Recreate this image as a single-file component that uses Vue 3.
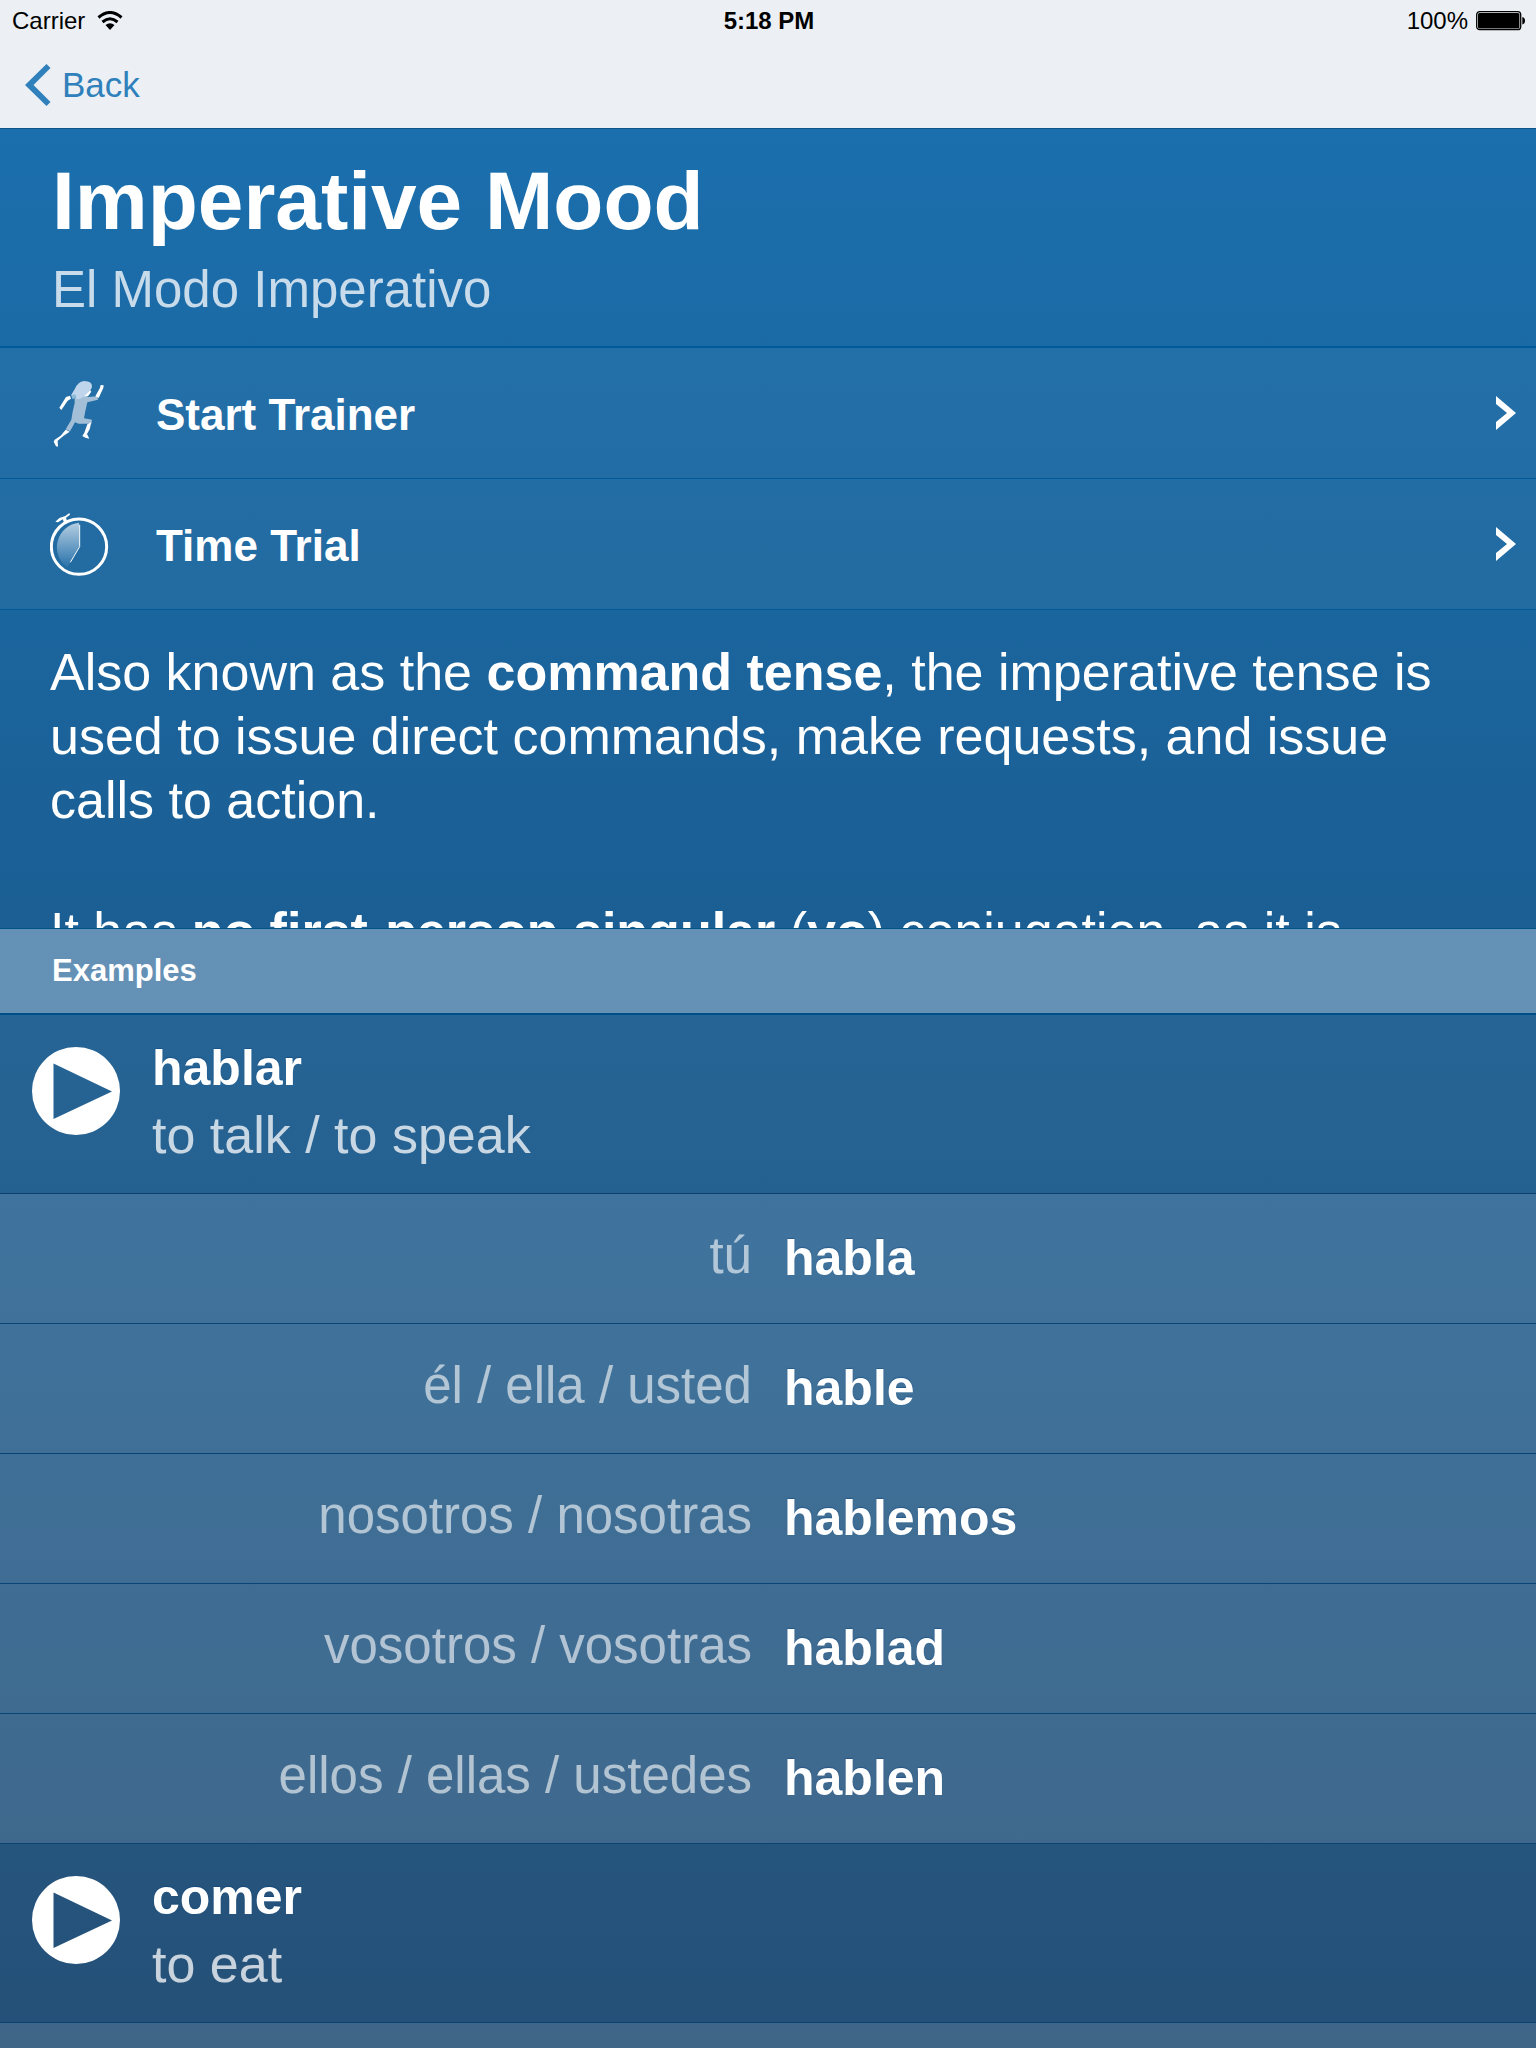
<script setup>
const actions = [
  { id: 'trainer', label: 'Start Trainer' },
  { id: 'trial', label: 'Time Trial' }
]

const verbs = [
  {
    name: 'hablar',
    meaning: 'to talk / to speak',
    forms: [
      { pronoun: 'tú', form: 'habla' },
      { pronoun: 'él / ella / usted', form: 'hable' },
      { pronoun: 'nosotros / nosotras', form: 'hablemos' },
      { pronoun: 'vosotros / vosotras', form: 'hablad' },
      { pronoun: 'ellos / ellas / ustedes', form: 'hablen' }
    ]
  },
  { name: 'comer', meaning: 'to eat', forms: [] }
]
</script>

<template>
  <div class="screen">
    <header class="chrome">
      <div class="status">
        <div class="status-side">
          <span>Carrier</span>
          <svg width="26" height="20" viewBox="0 0 26 20" aria-hidden="true">
            <path d="M1.5 6.5Q13 -3.5 24.5 6.5" fill="none" stroke="#000" stroke-width="3" />
            <path d="M5.5 11Q13 4.5 20.5 11" fill="none" stroke="#000" stroke-width="3" />
            <path d="M8.5 14Q13 10.5 17.5 14L13 19Z" />
          </svg>
        </div>
        <span class="clock">5:18 PM</span>
        <div class="status-side end">
          <span>100%</span>
          <svg width="50" height="20" viewBox="0 0 50 20" aria-hidden="true">
            <rect x="0.7" y="0.7" width="44" height="18" rx="3" fill="none" stroke="#000" stroke-width="1.3" />
            <rect x="2" y="2" width="41.4" height="15.4" rx="1.5" />
            <path d="M46.3 6Q49 6.5 49 9.7T46.3 13.5Z" />
          </svg>
        </div>
      </div>
      <nav class="nav">
        <a class="back" href="#">
          <svg width="26" height="42" viewBox="0 0 26 42" aria-hidden="true">
            <path d="M21.5 0L25.5 4L8.5 21L25.5 38L21.5 42L0 21Z" fill="#2f80bb" />
          </svg>
          <span>Back</span>
        </a>
      </nav>
    </header>

    <main class="content">
      <section class="hero">
        <h1>Imperative Mood</h1>
        <p>El Modo Imperativo</p>
      </section>

      <button v-for="action in actions" :key="action.id" class="action" type="button">
        <svg v-if="action.id === 'trainer'" width="60" height="72" viewBox="60 48 180 216" aria-hidden="true">
          <path d="M134 111L164 106L176 108L202 106L204 116L172 124L166 150L162 172L186 176L184 188L146 188L135 184L120 211L107 205L124 176L128 152L134 126Z" fill="#a3bfd8" />
          <path d="M123 103L134 85Q143 62 162 60Q188 60 186 78Q182 91 164 104Q150 116 139 114L135 104Z" fill="#bfd5eb" />
          <path d="M123 103L136 100L139 109L128 115Z" fill="#8db9d9" />
          <path d="M108 108L120 104L123 113L113 119L94 147L88 140Z" fill="#fff" />
          <path d="M160 107L181 88L184 92L174 106Z" fill="#fff" />
          <path d="M196 106L210 80L212 72L221 73L220 81L206 111Z" fill="#fff" />
          <path d="M107 206L119 212L101 224L83 239L84 257L78 256L71 242L74 236L92 224Z" fill="#fff" />
          <path d="M172 190L184 184L179 205L171 219L178 233L166 230L157 225L163 215Z" fill="#fff" />
        </svg>
        <svg v-else width="60" height="72" viewBox="60 440 180 216" aria-hidden="true">
          <defs>
            <linearGradient id="dial" x1="0" y1="0" x2="0" y2="1">
              <stop offset="0" stop-color="#b4cee2" />
              <stop offset="1" stop-color="#2872aa" />
            </linearGradient>
          </defs>
          <path d="M147 556L147 484A74 74 0 0 0 112 618Z" fill="url(#dial)" />
          <circle cx="147" cy="556" r="83" fill="none" stroke="#fff" stroke-width="9" />
          <path d="M149 490V556L121 603" fill="none" stroke="#fff" stroke-width="3" />
          <path d="M76 481L88 470L106 464L118 455L120 460L108 469L111 479L102 483L98 474L84 483Z" fill="#fff" />
        </svg>
        <span class="action-label">{{ action.label }}</span>
        <svg width="20" height="34" viewBox="0 0 20 34" aria-hidden="true">
          <path d="M0 0L20 17L0 34V26L11 17L0 8Z" fill="#fff" />
        </svg>
      </button>

      <section class="prose">
        <p>
          Also known as the <strong>command tense</strong>, the imperative tense is used to issue
          direct commands, make requests, and issue calls to action.
        </p>
        <p>It has <strong>no first-person singular</strong> (<strong>yo</strong>) conjugation, as it is</p>
      </section>

      <h2 class="section-title">Examples</h2>

      <section v-for="verb in verbs" :key="verb.name" class="verb">
        <div class="verb-head">
          <button class="play" type="button" :aria-label="verb.name">
            <svg width="88" height="88" viewBox="0 0 88 88" aria-hidden="true">
              <path
                fill="#fff"
                fill-rule="evenodd"
                d="M44 0A44 44 0 0 1 44 88A44 44 0 0 1 44 0ZM21.5 16.5V72L80 44.5Z"
              />
            </svg>
          </button>
          <div>
            <h3>{{ verb.name }}</h3>
            <p>{{ verb.meaning }}</p>
          </div>
        </div>
        <table v-if="verb.forms.length" class="forms">
          <tbody>
            <tr v-for="item in verb.forms" :key="item.form">
              <th scope="row">{{ item.pronoun }}</th>
              <td>{{ item.form }}</td>
            </tr>
          </tbody>
        </table>
      </section>
      <div class="next-row"></div>
    </main>
  </div>
</template>

<style>
body {
  margin: 0;
}
</style>

<style scoped>
.screen {
  display: flex;
  flex-direction: column;
  height: 100vh;
  overflow: hidden;
  font-family: "Liberation Sans", Arial, sans-serif;
  color: #fff;
}

h1,
h2,
h3,
p {
  margin: 0;
}

button {
  border: 0;
  padding: 0;
  background: none;
  color: inherit;
  font: inherit;
  cursor: pointer;
}

svg {
  display: block;
  flex: none;
}

.chrome {
  flex: none;
  background: #ecf0f4;
  border-bottom: 1px solid #0f5488;
}

.status {
  display: flex;
  align-items: center;
  height: 42px;
  padding: 0 10px 0 12px;
  font-size: 24px;
  color: #000;
}

.status-side {
  display: flex;
  flex: 1;
  align-items: center;
  gap: 12px;
}

.status-side.end {
  justify-content: flex-end;
  gap: 8px;
}

.clock {
  font-weight: bold;
}

.nav {
  display: flex;
  height: 86px;
  padding: 0 25px;
}

.back {
  display: flex;
  align-items: center;
  gap: 11px;
  color: #2f80bb;
  font-size: 35px;
  text-decoration: none;
}

.content {
  display: flex;
  flex: 1;
  flex-direction: column;
  min-height: 0;
  background: linear-gradient(#1b6fad, #1a4770);
}

.content > * {
  flex: none;
}

.hero {
  padding: 24px 52px;
  border-bottom: 2px solid #005b9b;
}

.hero h1 {
  margin-bottom: 8px;
  font-size: 82px;
  line-height: 96px;
}

.hero p {
  font-size: 51px;
  line-height: 65px;
  color: #c8dbeb;
}

.action {
  display: flex;
  align-items: center;
  height: 131px;
  padding: 0 20px 0 50px;
  border-bottom: 1px solid #005b9b;
  background: rgba(255, 255, 255, 0.04);
  text-align: left;
}

.action-label {
  flex: 1;
  margin-left: 46px;
  padding-top: 3px;
  font-size: 44px;
  font-weight: bold;
}

.prose {
  height: 288px;
  padding: 30px 50px 0;
  overflow: hidden;
  font-size: 52px;
  line-height: 64px;
}

.prose p {
  margin-bottom: 67px;
}

.section-title {
  padding: 0 52px;
  border-top: 1px solid #005289;
  border-bottom: 2px solid #004e87;
  background: rgba(255, 255, 255, 0.32);
  background-clip: padding-box;
  font-size: 31px;
  line-height: 84px;
}

.verb-head {
  display: flex;
  gap: 32px;
  height: 178px;
  padding: 0 32px;
  border-bottom: 1px solid #08406f;
  background: rgba(255, 255, 255, 0.05);
}

.play {
  align-self: flex-start;
  margin-top: 32px;
}

.verb-head h3 {
  margin-top: 20px;
  font-size: 50px;
  line-height: 67px;
  text-shadow: 0 -1px 1px rgba(0, 60, 120, 0.4);
}

.verb-head p {
  font-size: 52px;
  line-height: 67px;
  color: rgba(255, 255, 255, 0.75);
}

.forms {
  width: 100%;
  border-spacing: 0;
  table-layout: fixed;
  background: rgba(255, 255, 255, 0.165);
}

.forms th,
.forms td {
  box-sizing: border-box;
  height: 130px;
  padding: 0 16px 2px;
  border-bottom: 1px solid #084574;
  vertical-align: middle;
}

.forms th {
  padding-bottom: 6px;
  font-size: 51px;
  font-weight: normal;
  text-align: right;
  color: rgba(255, 255, 255, 0.6);
}

.forms td {
  font-size: 50px;
  font-weight: bold;
  text-shadow: 0 -1px 1px rgba(0, 60, 120, 0.4);
}

.content > .next-row {
  flex: 1;
  background: rgba(255, 255, 255, 0.165);
}
</style>
